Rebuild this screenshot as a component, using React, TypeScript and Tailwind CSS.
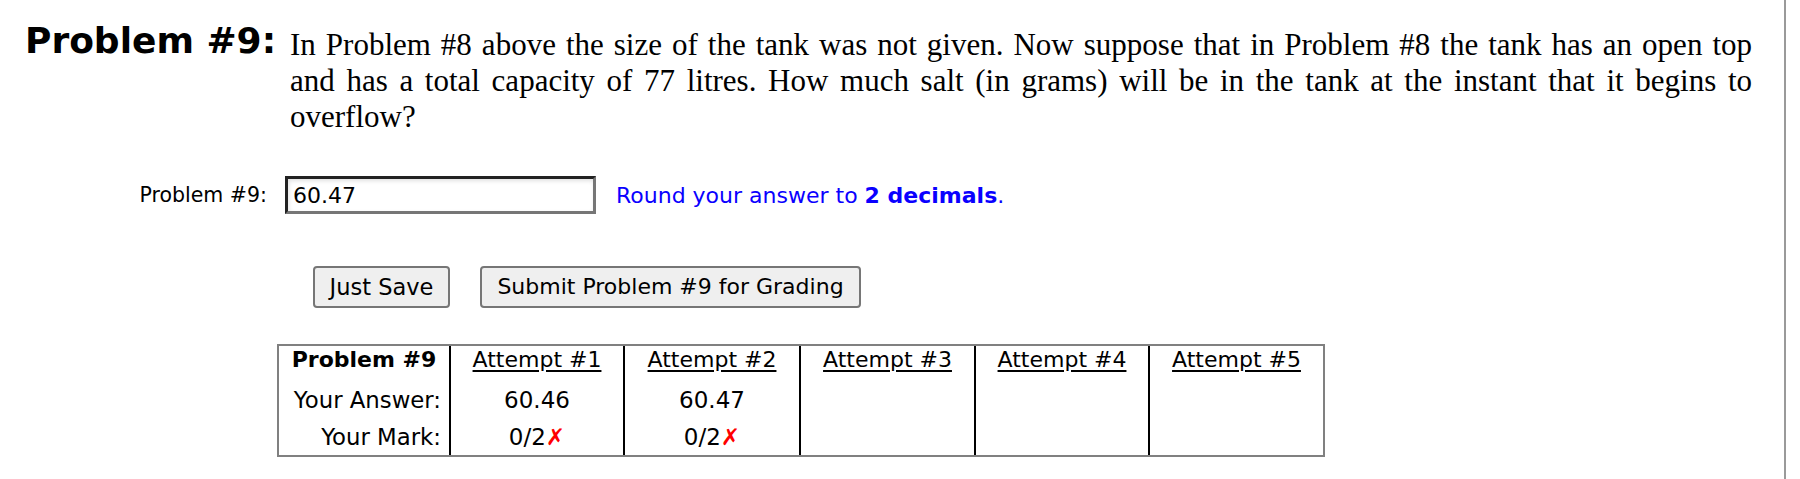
import React from "react";

export default function App() {
  const cols = ["Attempt #1", "Attempt #2", "Attempt #3", "Attempt #4", "Attempt #5"];
  const answers = ["60.46", "60.47", "", "", ""];
  const marks = [true, true, false, false, false];
  return (
    <div className="w-[1786px] h-[479px] border-r-2 border-[#9a9a9a] bg-white text-black overflow-hidden font-['DejaVu_Sans',sans-serif]">
      <div className="flex items-start h-[158px]">
        <div className="w-[290px] pl-[25px] pt-[23px] text-[36px] leading-[36px] font-bold whitespace-nowrap">
          Problem #9:
        </div>
        <p className="w-[1462px] pt-[27px] text-justify font-['Liberation_Serif','Times_New_Roman',serif] text-[31px] leading-[36px]">
          In Problem #8 above the size of the tank was not given. Now suppose that in Problem #8 the tank has an open top
          and has a total capacity of 77 litres. How much salt (in grams) will be in the tank at the instant that it begins to
          overflow?
        </p>
      </div>

      <div className="mt-[18px] flex items-center">
        <div className="w-[267px] text-right text-[20.5px] whitespace-nowrap">Problem #9:</div>
        <div className="ml-[18px] w-[311px] h-[38px] border-[3px] border-t-[#222] border-l-[#222] border-b-[#767676] border-r-[#767676] bg-white shadow-[inset_1px_2px_4px_rgba(0,0,0,0.12)] flex items-center pl-[5px] text-[22px]">
          60.47
        </div>
        <div className="ml-[20px] text-[22px] text-[#0a00ff] whitespace-nowrap">
          Round your answer to <span className="font-bold">2 decimals</span>.
        </div>
      </div>

      <div className="mt-[52px] flex items-center pl-[313px] gap-[30px]">
        <button className="w-[137px] h-[42px] border-2 border-[#767676] rounded-[4px] bg-[#efefef] text-[22.5px] leading-none">
          Just Save
        </button>
        <button className="w-[381px] h-[42px] border-2 border-[#767676] rounded-[4px] bg-[#efefef] text-[22px] leading-none">
          Submit Problem #9 for Grading
        </button>
      </div>

      <div className="mt-[36px] ml-[277px] w-fit border-2 border-[#808080]">
        <div className="grid grid-cols-[170px_174px_176px_175px_174px_175px] grid-rows-[40px_38px_31px] text-[22px] leading-[25px]">
          <div className="text-center font-bold pt-[1px]">Problem #9</div>
          {cols.map((c) => (
            <div key={c} className="border-l-2 border-black text-center pt-[1px]">
              <span className="underline underline-offset-[3px]">{c}</span>
            </div>
          ))}
          <div className="text-right pr-[8px] pt-[2px] text-[22.8px]">Your Answer:</div>
          {answers.map((a, i) => (
            <div key={i} className="border-l-2 border-black text-center pt-[2px] text-[23px]">
              {a}
            </div>
          ))}
          <div className="text-right pr-[8px] pt-[1px] text-[22.8px]">Your Mark:</div>
          {marks.map((m, i) => (
            <div key={i} className="border-l-2 border-black text-center pt-[1px] text-[23px]">
              {m ? (
                <>
                  0/2<span className="text-[#ff0000] font-bold">✗</span>
                </>
              ) : null}
            </div>
          ))}
        </div>
      </div>
    </div>
  );
}
